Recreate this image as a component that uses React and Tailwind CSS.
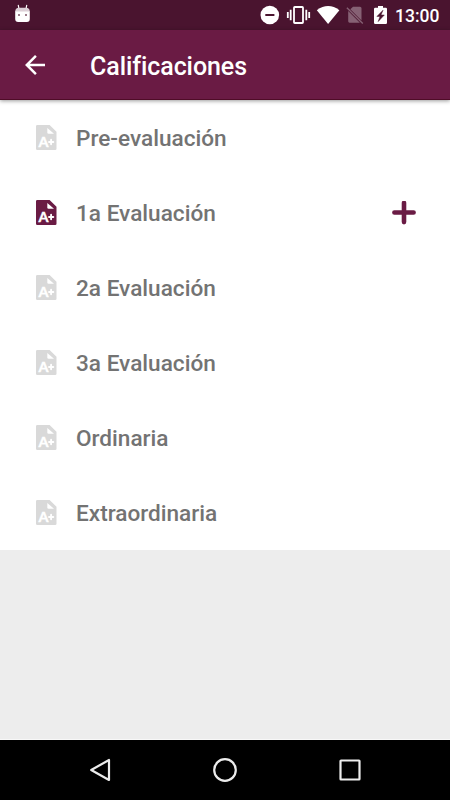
const evaluations = [
  { name: "Pre-evaluación" },
  { name: "1a Evaluación", available: true },
  { name: "2a Evaluación" },
  { name: "3a Evaluación" },
  { name: "Ordinaria" },
  { name: "Extraordinaria" },
];

function GradeIcon({ active }) {
  return (
    <svg viewBox="0 0 21 25" className={`w-[21px] h-[25px] shrink-0 ${active ? "text-[#6a1b44]" : "text-[#d9d9d9]"}`}>
      <path
        fill="currentColor"
        d="M1.3 0H13.6L20.5 6.8V23.7A1.3 1.3 0 0 1 19.2 25H1.3A1.3 1.3 0 0 1 0 23.7V1.3A1.3 1.3 0 0 1 1.3 0Z"
      />
      <path fill="#fff" d="M11.3 3L18 8.8H12.6A1.3 1.3 0 0 1 11.3 7.5Z" />
      <text x="2.6" y="21.6" fill="#fff" stroke="#fff" strokeWidth="0.3" fontFamily="Lato" fontWeight="900" fontSize="12.8" textLength="10" lengthAdjust="spacingAndGlyphs">
        A
      </text>
      <path stroke="#fff" strokeWidth="1.9" strokeLinecap="round" d="M13 17H17.3M15.1 14.8V19.2" />
    </svg>
  );
}

function StatusBar() {
  return (
    <div className="h-[30px] bg-[#4a142f] flex items-center justify-between text-white">
      <svg viewBox="0 0 30 30" className="w-[30px] h-[30px]" fill="#fff">
        <path stroke="#fff" strokeWidth="1.2" strokeLinecap="round" d="M18.3 5.4L19 9M26.7 5.4L26 9" />
        <path d="M15.2 11.8Q15.2 7.8 19 7.8H26Q29.8 7.8 29.8 11.8Z" fill="#dccfd6" />
        <path d="M15.2 11.2H29.8V19Q29.8 22 26.8 22H18.2Q15.2 22 15.2 19Z" />
        <path d="M18 14h2v2h-2zM25 14h2v2h-2z" fill="#9c7c8b" />
      </svg>
      <div className="flex items-center">
        <svg viewBox="255 0 138 30" className="w-[138px] h-[30px]">
          <circle cx="269.8" cy="15" r="9.3" fill="#fff" />
          <path stroke="#4a142f" strokeWidth="2" d="M265.3 15H274.4" />
          <rect x="294" y="7" width="9" height="16" rx="0.8" fill="none" stroke="#fff" strokeWidth="1.8" />
          <path stroke="#fff" strokeWidth="1.8" d="M287.8 12V18M290.7 9.7V20.3M306.3 9.7V20.3M309.2 12V18" />
          <path fill="#fff" d="M316.8 10.2Q328.2 1.8 339.4 10.2L328.1 24Z" />
          <path fill="#866174" d="M353 6.7H360Q361.5 6.7 361.5 8.2V20.4L350.3 9.3ZM348.2 11L359.9 22.7H349.6Q348.2 22.7 348.2 21.3Z" />
          <path stroke="#866174" strokeWidth="1.4" d="M346.9 7.7L362.8 23.6" />
          <path fill="#fff" d="M378 6H383V7.8H385.8Q387 7.8 387 9V22.8Q387 24 385.8 24H375.3Q374 24 374 22.8V9Q374 7.8 375.3 7.8H378Z" />
          <path fill="#4a142f" stroke="#4a142f" strokeWidth="0.5" d="M383 10.2L376.9 16.4H380L378.2 21.6L384.3 15H381Z" />
        </svg>
        <span className="w-[57px] pl-[2px] text-[17.5px] leading-none font-medium pt-[3px]">13:00</span>
      </div>
    </div>
  );
}

function AppBar() {
  return (
    <header className="h-[70px] bg-[#6a1b44] border-b border-[#4f0c27] flex items-center relative shadow-[0_1px_4px_rgba(0,0,0,0.4)]">
      <svg viewBox="0 0 30 30" className="w-[30px] h-[30px] ml-5 mr-10" fill="none" stroke="#fff" strokeWidth="2.5">
        <path d="M25 15H6.5M15.9 5.9L6.8 15L15.9 24.1" />
      </svg>
      <h1 className="text-[25px] tracking-[-0.08px] leading-none font-medium text-white pt-[3px]">Calificaciones</h1>
    </header>
  );
}

function NavBar() {
  return (
    <nav className="h-[60px] bg-black flex items-center justify-between px-[85px]">
      {[
        <path key="back" d="M6.2 15L24 5V25Z" />,
        <circle key="home" cx="15" cy="15" r="10.8" />,
        <rect key="recent" x="5.5" y="5.5" width="19" height="19" rx="0.5" />,
      ].map((shape) => (
        <svg
          key={shape.key}
          viewBox="0 0 30 30"
          className="w-[30px] h-[30px]"
          fill="none"
          stroke="#ececec"
          strokeWidth="2.2"
          strokeLinejoin="round"
        >
          {shape}
        </svg>
      ))}
    </nav>
  );
}

export default function App() {
  return (
    <div className="w-[450px] h-[800px] flex flex-col bg-[#ededed] overflow-hidden font-['Roboto',sans-serif]">
      <StatusBar />
      <AppBar />
      <ul className="bg-white">
        {evaluations.map((item) => (
          <li key={item.name} className="h-[75px] flex items-center pl-9 pr-[34px]">
            <GradeIcon active={item.available} />
            <span className="ml-[19px] flex-1 text-[22.6px] leading-[23px] font-medium text-[#737373] pt-[2px]">
              {item.name}
            </span>
            {item.available && (
              <svg viewBox="0 0 24 24" className="w-6 h-6" stroke="#6a1b44" strokeWidth="4.6" strokeLinecap="round">
                <path d="M2.4 11.5H21.6M12 1.9V21.1" />
              </svg>
            )}
          </li>
        ))}
      </ul>
      <div className="flex-1 border-b border-[#f8f8f8]" />
      <NavBar />
    </div>
  );
}
